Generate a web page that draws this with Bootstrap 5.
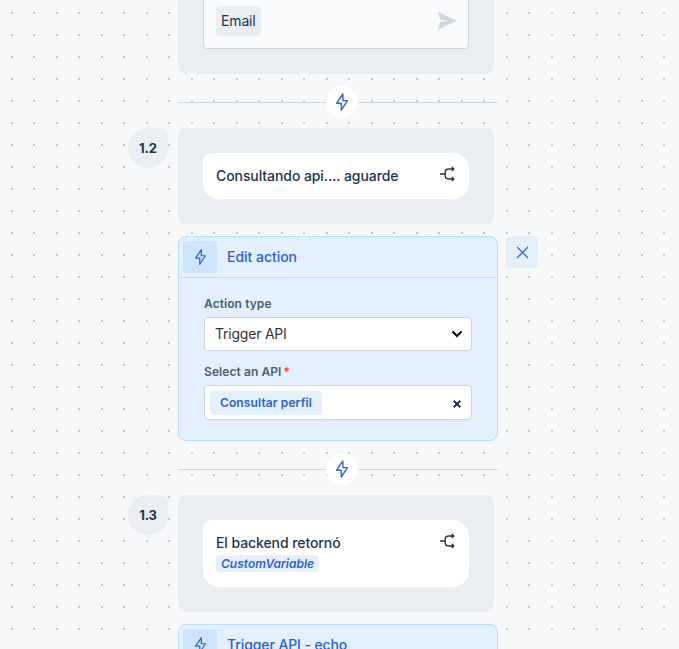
<!DOCTYPE html>
<html lang="es">
<head>
<meta charset="utf-8">
<meta name="viewport" content="width=device-width, initial-scale=1">
<title>Flow editor</title>
<link href="https://cdn.jsdelivr.net/npm/bootstrap@5.3.0/dist/css/bootstrap.min.css" rel="stylesheet">
<style>
body{height:649px;font-family:Inter,sans-serif;font-size:14px;line-height:20px;color:#1b364d;
background:url("data:image/svg+xml,%3Csvg xmlns='http://www.w3.org/2000/svg' width='45' height='22'%3E%3Cpath fill='%23bdcad3' d='M11 12h2v2h-2zM33 12h2v2h-2z'/%3E%3C/svg%3E") #f6f8fa}
svg{display:block;fill:none;stroke:currentColor;flex:none}
.flow{width:320px;margin-left:178px}
.step{width:316px;padding:25px;background:#eaedf2;border-radius:8px}
.step-first{height:74px;border-radius:0 0 8px 8px;padding-top:0}
.entry{height:49px;border:1px solid #cdd6de;border-top:0;border-radius:0 0 4px 4px;background:#f8fafc;padding:6px 11px 13px 12px}
.chip{height:30px;padding:5px;border-radius:4px;background:#eaedf2;letter-spacing:-.15px}
.joint{height:54px}
.joint::before,.joint::after{content:"";height:1px;background:#cdd6de;margin-top:2px}
.joint::before{width:148px}
.joint::after{flex:1}
.bolt-dot{width:32px;height:32px;color:#3161cb;margin-top:2px}
.stepno{left:-50px;top:0;width:40px;height:40px;background:#eaedf2;border-radius:20px 8px 20px 20px;font-size:13px;letter-spacing:-.1px}
.bubble{background:#fff;border-radius:8px 16px 16px 16px;padding:13px 14px 13px 13px;letter-spacing:-.08px}
.bubble-tall{height:67px}
.variable{font-size:12px;line-height:17px;background:#e4f1fd;color:#3161cb;border-radius:4px;padding:0 5px;letter-spacing:0}
.action{border:1px solid #b9dcfb;border-radius:8px;background:#e4f0fd;margin-top:12px}
.action-head{height:41px;padding:4px;border-bottom:1px solid #b9dcfb;color:#3161cb;letter-spacing:-.03px}
.action-next .action-head{letter-spacing:-.1px}
.action-icon{width:34px;height:32px;background:#cfe5fe;border-radius:4px}
.head-label{margin-left:10px}
.closer{left:327px;top:-1px;width:32px;height:32px;background:#e4f1fd;color:#3161cb;border-radius:4px}
.action-body{padding:18px 25px 20px}
.caption{font-size:12px;line-height:16px;color:#4b5f6f;letter-spacing:.08px}
.field{border:1px solid #cbd5dd;border-radius:4px;background:#fff}
.type-field{height:34px;margin:5px 0 13px;padding:0 8px 0 10px;color:#333;letter-spacing:-.22px}
.api-field{height:35px;margin-top:5px;padding:0 10px 0 5px}
.api-field svg{margin-top:2px}
.token{height:24px;font-size:12px;background:#e4f1fd;color:#3161cb;border-radius:4px;padding:0 10px;letter-spacing:.11px}
.required{color:#f04438;margin-left:2px}
</style>
<script src="https://cdn.jsdelivr.net/npm/bootstrap@5.3.0/dist/js/bootstrap.bundle.min.js"></script>
</head>
<body class="overflow-hidden">
<svg class="d-none" aria-hidden="true">
<symbol id="bolt" viewBox="0 0 14 20"><path d="M7.900 1.800 1.600 11.200h4.600v7l6.200-9.600H7.900z" stroke-width="1.350" stroke-linejoin="round"/></symbol>
<symbol id="branch" viewBox="0 0 16 16"><path d="M1 8h4.800M14.500 3H10Q6.200 3 6.200 6.500v3q0 3.500 3.800 3.500h4.500M12.800 1l2 2-2 2M12.800 11l2 2-2 2" stroke-width="1.350"/></symbol>
</svg>
<main class="flow">
  <section class="step step-first">
    <div class="entry d-flex justify-content-between align-items-start">
      <span class="chip">Email</span>
      <svg class="mt-1" width="20" height="20" viewBox="0 0 20 20"><path d="M1 2 20 10.800 1 19.500l2-7.500 8-1.200-8-1.200z" fill="#ced7df" stroke="none"/></svg>
    </div>
  </section>
  <div class="joint d-flex align-items-center"><span class="bolt-dot bg-white rounded-circle d-flex align-items-center justify-content-center"><svg width="14" height="20"><use href="#bolt"/></svg></span></div>
  <section class="step position-relative">
    <span class="stepno position-absolute d-flex align-items-center justify-content-center fw-bold">1.2</span>
    <div class="bubble fw-medium d-flex justify-content-between">Consultando api.... aguarde<svg width="16" height="16"><use href="#branch"/></svg></div>
  </section>
  <section class="action position-relative">
    <div class="action-head d-flex align-items-center fw-medium">
      <span class="action-icon d-flex align-items-center justify-content-center"><svg width="13" height="18"><use href="#bolt"/></svg></span><span class="head-label">Edit action</span>
    </div>
    <button class="closer btn p-0 border-0 position-absolute d-flex align-items-center justify-content-center" aria-label="Close"><svg width="13" height="13" viewBox="0 0 13 13"><path d="m1 1 11 11m0-11-11 11" stroke-width="1.200"/></svg></button>
    <div class="action-body">
      <div class="caption fw-semibold">Action type</div>
      <div class="field type-field d-flex align-items-center justify-content-between">Trigger API<svg width="12" height="8" viewBox="0 0 12 8"><path d="m1.500 1.500 4.500 4.500 4.500-4.500" stroke="#000" stroke-width="2"/></svg></div>
      <div class="caption fw-semibold">Select an API<span class="required">*</span></div>
      <div class="field api-field d-flex align-items-center justify-content-between"><span class="token fw-semibold d-flex align-items-center">Consultar perfil</span><svg width="8" height="8" viewBox="0 0 8 8"><path d="m.7.7 6.600 6.600m0-6.600L.7 7.300" stroke-width="2"/></svg></div>
    </div>
  </section>
  <div class="joint d-flex align-items-center"><span class="bolt-dot bg-white rounded-circle d-flex align-items-center justify-content-center"><svg width="14" height="20"><use href="#bolt"/></svg></span></div>
  <section class="step position-relative">
    <span class="stepno position-absolute d-flex align-items-center justify-content-center fw-bold">1.3</span>
    <div class="bubble bubble-tall fw-medium d-flex justify-content-between"><div>El backend retornó<div><span class="variable d-inline-block fst-italic fw-semibold">CustomVariable</span></div></div><svg width="16" height="16"><use href="#branch"/></svg></div>
  </section>
  <section class="action action-next">
    <div class="action-head d-flex align-items-center fw-medium">
      <span class="action-icon d-flex align-items-center justify-content-center"><svg width="13" height="18"><use href="#bolt"/></svg></span><span class="head-label">Trigger API - echo</span>
    </div>
  </section>
</main>
</body>
</html>
